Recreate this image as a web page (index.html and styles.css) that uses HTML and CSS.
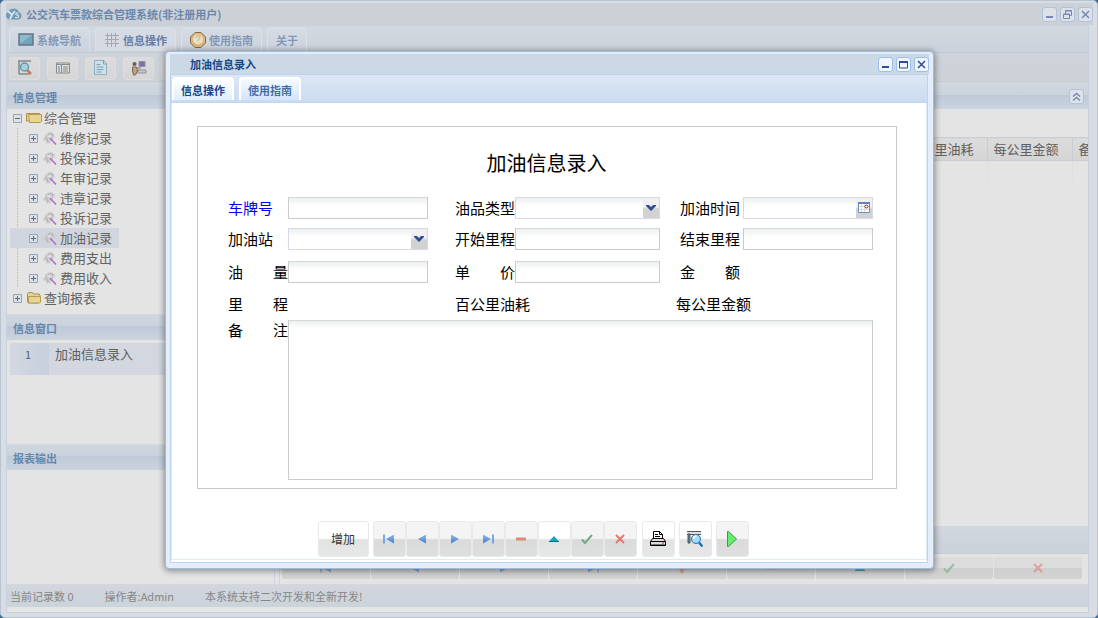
FILE: index.html
```html
<!DOCTYPE html>
<html lang="zh-CN">
<head>
<meta charset="utf-8">
<title>公交汽车票款综合管理系统</title>
<link rel="stylesheet" href="styles.css">
</head>
<body>
<svg class="defs" aria-hidden="true">
  <defs>
    <linearGradient id="blue" x1="0" y1="0" x2="0" y2="1"><stop offset="0" stop-color="#8cbcf0"/><stop offset="1" stop-color="#3f7fc8"/></linearGradient>
    <symbol id="minimize" viewBox="0 0 15 15"><path d="M4 10h7" stroke="currentColor" stroke-width="2"/></symbol>
    <symbol id="maximize" viewBox="0 0 15 15"><path d="M3.500 4v7h8V4" fill="none" stroke="currentColor"/><path d="M3 5h9" stroke="currentColor" stroke-width="2"/></symbol>
    <symbol id="restore" viewBox="0 0 15 15"><path d="M5.500 7V3.500h6v5H9M3.500 7h6v4.500h-6zM3 7.500h7M5 4h7" fill="none" stroke="currentColor"/></symbol>
    <symbol id="close" viewBox="0 0 15 15"><path d="M4 4l7 7M11 4l-7 7" stroke="currentColor" stroke-width="1.500"/></symbol>
    <symbol id="first" viewBox="0 0 16 16"><path d="M3 3.500v9" stroke="#4f93de" stroke-width="1.500"/><path d="M13 3.500v9L5 8z" fill="url(#blue)"/></symbol>
    <symbol id="prev" viewBox="0 0 16 16"><path d="M12 3.500v9L4 8z" fill="url(#blue)"/></symbol>
    <symbol id="next" viewBox="0 0 16 16"><path d="M4 3.500v9L12 8z" fill="url(#blue)"/></symbol>
    <symbol id="last" viewBox="0 0 16 16"><path d="M3 3.500v9L11 8z" fill="url(#blue)"/><path d="M13 3.500v9" stroke="#4f93de" stroke-width="1.500"/></symbol>
    <symbol id="plus" viewBox="0 0 16 16"><path d="M3 8h10M8 3v10" stroke="#dd7a60" stroke-width="3"/></symbol>
    <symbol id="minus" viewBox="0 0 16 16"><path d="M3 8h10" stroke="#e08a72" stroke-width="3"/></symbol>
    <symbol id="up" viewBox="0 0 16 16"><path d="M3 10.500h10L8 5z" fill="#12a5bd"/><path d="M3 10.500h10" stroke="#0b6d82"/></symbol>
    <symbol id="check" viewBox="0 0 16 16"><path d="M3 8.500l3 3.500 7-8" fill="none" stroke="#6fab88" stroke-width="2"/></symbol>
    <symbol id="cross" viewBox="0 0 16 16"><path d="M4 4l8 8M12 4l-8 8" stroke="#e2796f" stroke-width="2"/></symbol>
    <symbol id="chevron" viewBox="0 0 16 20"><path d="M3 7h3l2 2 2-2h3v1l-5 5-5-5z" fill="#2d4f93"/></symbol>
    <symbol id="gear" viewBox="0 0 14 14"><path d="M0 8l2-3 0-2 2 0 1-2 2 1 1-2 2 3 2 0-1 2 2 1-3 1 0 2-2 1-1 3-2-1-2 1 0-3-2 0z" fill="#cdcdcd"/><path d="M5 4l3-2M9 2l1 3M3 6l2 5" stroke="#adadad" fill="none"/><path d="M5.500 4.500l2 2" stroke="#e4e4e4" stroke-width="2"/><path d="M7 7l6 6.500" stroke="#b06ed0" stroke-width="1.600"/></symbol>
    <symbol id="folder" viewBox="0 0 16 12"><path d="M1.500 10V1.500l1-1h4l1 1.500h5.500l1 1V10l-1 1H2.500z" fill="#e3d295" stroke="#ad914d"/><path d="M2.500 4.500h12v5.500l-1 1h-11z" fill="#e6d491" stroke="#b79b53"/></symbol>
    <symbol id="folder-open" viewBox="0 0 16 12"><path d="M.5 9V1.500h13V9z" fill="#e3d295" stroke="#ad914d"/><path d="M2.500 2.500h13v7l-1 1h-11z" fill="#e8d68e" stroke="#b79b53"/></symbol>
    <symbol id="expand" viewBox="0 0 9 9"><path d="M.5.5h8v8h-8z" fill="#dbe0e6" stroke="#93a6bd"/><path d="M2 4.500h5M4.500 2v5" stroke="#5a6a80"/></symbol>
    <symbol id="collapse" viewBox="0 0 9 9"><path d="M.5.5h8v8h-8z" fill="#dbe0e6" stroke="#93a6bd"/><path d="M2 4.500h5" stroke="#5a6a80"/></symbol>
  </defs>
</svg>

<div class="app">
  <header class="titlebar">
    <svg class="logo" viewBox="0 0 16 14"><path d="M4 12.500a4 4 0 0 1-2-7.500 4 4 0 0 1 4-3 5 5 0 0 1 7 3 4 4 0 0 1 0 7.500z" fill="#6f9cbb"/><path d="M2 4l4 4 3-4M6 8l-2 4" stroke="#dce4eb" stroke-width="1.800" fill="none"/><path d="M12.500 6H10v2h2.500v2.500H9" stroke="#dce4eb" fill="none"/></svg>
    <h1 class="caption">公交汽车票款综合管理系统(非注册用户)</h1>
    <button class="tool muted" type="button" aria-label="最小化"><svg><use href="#minimize"/></svg></button>
    <button class="tool muted" type="button" aria-label="还原"><svg><use href="#restore"/></svg></button>
    <button class="tool muted" type="button" aria-label="关闭"><svg><use href="#close"/></svg></button>
  </header>

  <div class="frame">
    <nav class="menu">
      <button class="menu-tab" type="button"><svg viewBox="0 0 16 16"><path d="M1 2h14v11H1z" fill="#71a3bd" stroke="#647585" stroke-width="1.500"/><path d="M2 3h12L2 12z" fill="#8fb9cc"/></svg>系统导航</button>
      <button class="menu-tab current" type="button"><svg viewBox="0 0 16 16"><path d="M3.500 1v14M7.500 1v14M11.500 1v14M1 3.500h14M1 7.500h14M1 11.500h14" stroke="#a7a7a7"/></svg>信息操作</button>
      <button class="menu-tab" type="button"><svg viewBox="0 0 16 16"><path d="M5 .5h6L15.500 5v6L11 15.500H5L.5 11V5z" fill="#dbb875" stroke="#846a50"/><circle cx="8" cy="7.500" r="5" fill="#e6dfce"/><path d="M6 6c0-3 5-3 4 0-.5 1-2 1-2 3" stroke="#c9a65f" fill="none"/></svg>使用指南</button>
      <button class="menu-tab" type="button">关于</button>
    </nav>

    <div class="toolbar">
      <button class="square" type="button" aria-label="查询"><svg viewBox="0 0 16 16"><path d="M1 1h13M2 14h10M2 1v13" stroke="#888" stroke-width="1.500"/><circle cx="7.500" cy="7" r="4" fill="#a9d0dd" stroke="#629ab1" stroke-width="1.500"/><path d="M10 10l4 4" stroke="#c87a5a" stroke-width="2.500"/></svg></button>
      <button class="square" type="button" aria-label="列表"><svg viewBox="0 0 16 16"><path d="M1.500 3h13v10h-13zM1.500 4.500h13M6.500 5v8" fill="#dedede" stroke="#8b8b8b"/><path d="M3 7h2M3 9h2M3 11h2" stroke="#5d8ba2"/><path d="M8 7h5M8 9h5M8 11h5" stroke="#888"/></svg></button>
      <button class="square" type="button" aria-label="单据"><svg viewBox="0 0 16 16"><path d="M1.500.5h9l3 3v11h-12z" fill="#cfe0e8" stroke="#8fb1c2"/><path d="M10.500 0v4h3M3.500 4.500h4M3.500 7h7M3.500 9.500h7M3.500 12h5" stroke="#79a3b8" fill="none"/></svg></button>
      <button class="square" type="button" aria-label="用户"><svg viewBox="0 0 16 16"><path d="M8 1.500h6v5H8z" fill="#7773ad" stroke="#8d91a6"/><path d="M7 10h8v3H7z" fill="#c9c9d1" stroke="#8d8d99"/><path d="M6 8h4" stroke="#777"/><circle cx="3.500" cy="4" r="2" fill="#6b5b50"/><path d="M1.500 7h4l1 4-2 4h-2l-1-4z" fill="#c0a377" stroke="#7a6a55"/></svg></button>
      <button class="square" type="button" aria-label="更多"></button>
    </div>

    <div class="workspace">
      <aside class="sidebar">
        <section class="panel tree-panel">
          <h2 class="panel-head">信息管理</h2>
          <ul class="tree">
            <li><div class="node"><svg class="knob"><use href="#collapse"/></svg><svg class="folder"><use href="#folder-open"/></svg>综合管理</div>
              <ul class="branch">
                <li class="node"><svg class="knob"><use href="#expand"/></svg><svg class="leaf"><use href="#gear"/></svg>维修记录</li>
                <li class="node"><svg class="knob"><use href="#expand"/></svg><svg class="leaf"><use href="#gear"/></svg>投保记录</li>
                <li class="node"><svg class="knob"><use href="#expand"/></svg><svg class="leaf"><use href="#gear"/></svg>年审记录</li>
                <li class="node"><svg class="knob"><use href="#expand"/></svg><svg class="leaf"><use href="#gear"/></svg>违章记录</li>
                <li class="node"><svg class="knob"><use href="#expand"/></svg><svg class="leaf"><use href="#gear"/></svg>投诉记录</li>
                <li class="node selected"><svg class="knob"><use href="#expand"/></svg><svg class="leaf"><use href="#gear"/></svg>加油记录</li>
                <li class="node"><svg class="knob"><use href="#expand"/></svg><svg class="leaf"><use href="#gear"/></svg>费用支出</li>
                <li class="node"><svg class="knob"><use href="#expand"/></svg><svg class="leaf"><use href="#gear"/></svg>费用收入</li>
              </ul>
            </li>
            <li><div class="node"><svg class="knob"><use href="#expand"/></svg><svg class="folder"><use href="#folder"/></svg>查询报表</div></li>
          </ul>
        </section>
        <section class="panel windows-panel">
          <h2 class="panel-head">信息窗口</h2>
          <div class="window-row"><span class="row-number">1</span><span>加油信息录入</span></div>
        </section>
        <section class="panel report-panel">
          <h2 class="panel-head">报表输出</h2>
        </section>
      </aside>

      <main class="content">
        <div class="panel-head content-head">
          <button class="tool muted fold" type="button" aria-label="折叠"><svg viewBox="0 0 15 15"><path d="M4 7.500l3.500-3 3.500 3M4 11.500l3.500-3 3.500 3" fill="none" stroke="currentColor" stroke-width="1.500"/></svg></button>
        </div>
        <table class="records">
          <colgroup><col><col class="col"><col class="col"><col class="col-last"></colgroup>
          <thead><tr><th></th><th>百公里油耗</th><th>每公里金额</th><th>备注</th></tr></thead>
          <tbody><tr><td></td><td></td><td></td><td></td></tr></tbody>
        </table>
        <div class="content-strip"></div>
        <div class="record-nav">
          <button type="button" aria-label="首条"><svg><use href="#first"/></svg></button>
          <button type="button" aria-label="上一条"><svg><use href="#prev"/></svg></button>
          <button type="button" aria-label="下一条"><svg><use href="#next"/></svg></button>
          <button type="button" aria-label="末条"><svg><use href="#last"/></svg></button>
          <button type="button" aria-label="新增"><svg><use href="#plus"/></svg></button>
          <button type="button" aria-label="删除"><svg><use href="#minus"/></svg></button>
          <button type="button" aria-label="编辑"><svg><use href="#up"/></svg></button>
          <button type="button" aria-label="提交"><svg><use href="#check"/></svg></button>
          <button type="button" aria-label="取消"><svg><use href="#cross"/></svg></button>
        </div>
      </main>
    </div>

    <footer class="status"><span>当前记录数 0</span><span>操作者:Admin</span><span>本系统支持二次开发和全新开发!</span></footer>
  </div>

  <section class="dialog" role="dialog" aria-labelledby="dialog-title">
    <header class="dialog-bar">
      <h2 class="caption" id="dialog-title">加油信息录入</h2>
      <button class="tool" type="button" aria-label="最小化"><svg><use href="#minimize"/></svg></button>
      <button class="tool" type="button" aria-label="最大化"><svg><use href="#maximize"/></svg></button>
      <button class="tool" type="button" aria-label="关闭"><svg><use href="#close"/></svg></button>
    </header>
    <div class="dialog-body">
      <nav class="dialog-tabs">
        <button class="dialog-tab current" type="button">信息操作</button>
        <button class="dialog-tab" type="button">使用指南</button>
      </nav>
      <form class="entry">
        <div class="sheet">
          <h3 class="sheet-title">加油信息录入</h3>
          <div class="fields">
            <label class="required" for="plate">车牌号</label>
            <input class="box" id="plate" type="text">
            <label class="second" for="oil">油品类型</label>
            <span class="combo"><select class="box" id="oil"></select><svg class="trigger"><use href="#chevron"/></svg></span>
            <label class="third" for="time">加油时间</label>
            <span class="combo"><input class="box" id="time" type="text"><svg class="trigger" viewBox="0 0 16 20"><path d="M2.500 4.500h11v10h-11z" fill="#fff" stroke="#6c8fbf"/><path d="M2 5h12" stroke="#5c86bd" stroke-width="2"/><path d="M5.500 6v8M8.500 6v8M3 8.500h10M3 11.500h10" stroke="#dadada"/><circle cx="10.500" cy="8.500" r="1.500" fill="#fff" stroke="#a82020"/></svg></span>

            <label for="station">加油站</label>
            <span class="combo"><select class="box" id="station"></select><svg class="trigger"><use href="#chevron"/></svg></span>
            <label class="second" for="start">开始里程</label>
            <input class="box" id="start" type="text">
            <label class="third" for="end">结束里程</label>
            <input class="box" id="end" type="text">

            <label for="amount">油　　量</label>
            <input class="box" id="amount" type="text">
            <label class="second" for="price">单　　价</label>
            <input class="box" id="price" type="text">
            <span class="third wide">金　　额</span>

            <span class="wide">里　　程</span>
            <span class="second wide">百公里油耗</span>
            <span class="third wide per-km">每公里金额</span>

            <label class="note-label" for="note">备　　注</label>
            <textarea class="box note" id="note"></textarea>
          </div>
        </div>
        <div class="actions">
          <button class="action add" type="button">增加</button>
          <div class="action-group">
            <button class="action off" type="button" aria-label="首条"><svg><use href="#first"/></svg></button>
            <button class="action off" type="button" aria-label="上一条"><svg><use href="#prev"/></svg></button>
            <button class="action off" type="button" aria-label="下一条"><svg><use href="#next"/></svg></button>
            <button class="action off" type="button" aria-label="末条"><svg><use href="#last"/></svg></button>
            <button class="action off" type="button" aria-label="删除"><svg><use href="#minus"/></svg></button>
            <button class="action" type="button" aria-label="编辑"><svg><use href="#up"/></svg></button>
            <button class="action off" type="button" aria-label="提交"><svg><use href="#check"/></svg></button>
            <button class="action off" type="button" aria-label="取消"><svg><use href="#cross"/></svg></button>
          </div>
          <button class="action" type="button" aria-label="打印"><svg viewBox="0 0 16 16"><path d="M3.500 8V.5h6l3 3V8" fill="#fff" stroke="#000"/><path d="M9.500 0v3.500h3M5 3.500h3M5 5.500h5" stroke="#000" fill="none"/><path d="M.5 10.500l2-3h11l2 3v4H.5z" fill="#ddd" stroke="#000"/><path d="M1 10.500h14" stroke="#000"/><path d="M1 13.500h14" stroke="#777"/><path d="M12 12h2" stroke="#d43030"/></svg></button>
          <button class="action" type="button" aria-label="预览"><svg viewBox="0 0 16 16"><path d="M0 .5h14M0 3.500h14" stroke="#555"/><path d="M0 1h14v2H0z" fill="#ddd"/><path d="M1 3h2v9H1z" fill="#4b8bc1" stroke="#555"/><circle cx="9" cy="8" r="4.500" fill="#9fdcff" stroke="#2c6fa8"/><path d="M6.500 8c0-2 1-3 3-3" stroke="#fff" stroke-width="1.500" fill="none"/><path d="M12 11.500l3.500 4" stroke="#1976b5" stroke-width="2.500"/></svg></button>
          <button class="action off" type="button" aria-label="执行"><svg viewBox="0 0 16 16"><path d="M3.500.5v15h1L12.500 8 4.500.5z" fill="#62ef69" stroke="#4a8f50"/></svg></button>
        </div>
      </form>
    </div>
  </section>
</div>
</body>
</html>
```
FILE: styles.css
```css
* { box-sizing: border-box; }

body {
  margin: 0;
  background: #3f6a94;
  color: #606060;
  font: 13px/20px "Noto Sans CJK SC", "Noto Sans", sans-serif;
}

button, input, select, textarea { font: inherit; color: inherit; margin: 0; }
button { padding: 0; border: 0; background: none; }
h1, h2, h3, ul { margin: 0; padding: 0; list-style: none; font-weight: normal; }
.defs { position: absolute; width: 0; height: 0; }

/* Main window */
.app {
  position: relative;
  display: flex;
  flex-direction: column;
  min-height: 100vh;
  padding: 2px 5px 4px 5px;
  border: 1px solid #b8c4d2;
  border-radius: 5px;
  background: #d8dce3;
  overflow: hidden;
}

.titlebar {
  display: flex;
  align-items: center;
  gap: 3px;
  height: 22px;
  margin-right: -1px;
  background: #cbd1d7;
}
.logo { width: 16px; height: 14px; }
.caption { flex: 1; font-size: 11px; font-weight: bold; line-height: 16px; }
.titlebar .caption { color: #6988af; margin-left: 1px; }

.tool {
  width: 15px;
  height: 15px;
  border-radius: 3px;
  background: #f0f6ff;
  box-shadow: inset 0 0 0 1px #9dbfea;
  color: #2d4c9c;
}
.tool svg { display: block; width: 15px; height: 15px; }
.tool.muted { background: #dde2e8; box-shadow: inset 0 0 0 1px #b2c2d8; color: #7788b8; }

.frame {
  flex: 1;
  display: flex;
  flex-direction: column;
  margin-right: 3px;
  padding-bottom: 5px;
  border: 1px solid #c6d0df;
  background: #e4e4e4;
}

.menu {
  display: flex;
  align-items: flex-end;
  gap: 5px;
  height: 27px;
  padding: 0 2px 1px;
  background: linear-gradient(#d3d8e0, #cbd2db);
  border-bottom: 1px solid #bfcbd9;
}
.menu-tab {
  display: flex;
  align-items: center;
  gap: 3px;
  height: 23px;
  padding: 0 8px;
  border: 1px solid #dde1e7;
  border-bottom: 0;
  border-radius: 4px 4px 0 0;
  background: linear-gradient(#d6dae2, #cbd3df);
  color: #8298b7;
  font-size: 11px;
  font-weight: bold;
}
.menu-tab.current { color: #6680a8; background: #d5dae3; }
.menu-tab svg { width: 16px; height: 16px; }

.toolbar {
  display: flex;
  align-items: center;
  gap: 7px;
  height: 30px;
  padding: 0 2px;
  background: linear-gradient(#cfd4dc, #ccd1d7);
}
.square {
  display: flex;
  align-items: center;
  justify-content: center;
  width: 31px;
  height: 23px;
  border-radius: 3px;
  background: linear-gradient(#dcdcdc, #d6d6d6);
  border: 1px solid #dedede;
}
.square svg { width: 16px; height: 16px; }

.workspace { flex: 1; display: flex; }

.panel-head {
  height: 26px;
  padding: 0 6px;
  border-top: 1px solid #d6dbe2;
  background: linear-gradient(#cfd6df 0, #cad3dd 44%, #becad9 45%, #cbd4de 100%);
  color: #6786ae;
  font-size: 11px;
  font-weight: bold;
  line-height: 26px;
}

.sidebar { display: flex; flex-direction: column; width: 268px; border-right: 1px solid #cfd4de; }
.tree-panel { flex: 231 0 0; }
.windows-panel { flex: 129 0 0; }
.report-panel { flex: 140 0 0; }

.tree { padding-left: 3px; margin-top: -1px; }
.node { display: flex; align-items: center; width: 109px; height: 20px; padding-left: 3px; color: #636363; }
.branch { background: repeating-linear-gradient(#b8b8b8 0 1px, transparent 1px 2px) 7px 0 / 1px 100% no-repeat; }
.branch .node { padding-left: 19px; }
.selected { background: #d0d5df; }
.knob { width: 9px; height: 9px; margin-right: 4px; }
.folder { width: 16px; height: 12px; margin-right: 2px; }
.leaf { width: 14px; height: 14px; margin: 0 3px 0 1px; }

.window-row { display: flex; height: 32px; margin: 3px; background: #d2d7e0; }
.row-number { width: 39px; margin-right: 6px; padding-right: 3px; text-align: center; font-size: 11px; background: linear-gradient(90deg, #d3d8e1, #c7d0df); }
.window-row span { padding-top: 1px; }

.content { flex: 1; display: flex; flex-direction: column; margin-left: 4px; border-left: 1px solid #cfd4de; min-width: 0; }
.content-head { display: flex; justify-content: flex-end; align-items: center; padding-right: 4px; }
.records { width: 100%; margin-top: 28px; table-layout: fixed; border-collapse: collapse; }
.col { width: 85px; }
.col-last { width: 16px; }
.records th {
  height: 23px;
  padding: 0 0 0 6px;
  border: 1px solid #c8ccd3;
  border-width: 1px 1px 1px 0;
  background: linear-gradient(#dcdcdc, #d4d4d4);
  font-weight: normal;
  text-align: left;
  white-space: nowrap;
  overflow: hidden;
}
.records th:last-child, .records td:last-child { border-right: 0; }
.records td { height: 21px; padding: 0; border-right: 1px solid #dfdfdf; }
.content-strip { height: 28px; margin-top: auto; background: linear-gradient(#d2d6df, #cad2da); border-bottom: 1px solid #c2ccda; }
.record-nav { display: grid; grid-template-columns: repeat(9, 1fr); gap: 1px; padding: 3px 6px 5px 2px; }
.record-nav button {
  display: flex;
  align-items: center;
  justify-content: center;
  height: 22px;
  border-radius: 2px;
  background: linear-gradient(#dcdcdc 50%, #cfcfcf 52%, #d3d3d3);
}
.record-nav svg { width: 16px; height: 16px; opacity: 0.6; }

.status {
  display: flex;
  align-items: center;
  gap: 31px;
  height: 23px;
  padding: 0 3px;
  background: linear-gradient(#d2d6de, #cbd3db);
  color: #878787;
  font-size: 11px;
}

/* Entry dialog */
.dialog {
  position: absolute;
  inset: 50px 163px 48px 164px;
  display: flex;
  flex-direction: column;
  padding: 2px 5px 5px 4px;
  border: 1px solid #9cbbdf;
  border-radius: 4px;
  background: #e3edfb;
  box-shadow: 0 1px 6px 1px rgba(0, 0, 0, 0.4);
  color: #000;
}
.dialog-bar {
  display: flex;
  align-items: center;
  gap: 3px;
  height: 20px;
  margin-right: -1px;
  padding-left: 20px;
  background: #cbd8e6;
}
.dialog-bar .caption { color: #15498b; }
.dialog-body { flex: 1; display: flex; flex-direction: column; border: 1px solid #bcd3f0; background: #fff; }
.dialog-tabs {
  display: flex;
  align-items: flex-end;
  gap: 5px;
  height: 28px;
  padding: 0 1px 2px;
  background: linear-gradient(#dde7f6, #cbdbef);
  border-bottom: 1px solid #bfd5f0;
}
.dialog-tab {
  width: 62px;
  height: 23px;
  border: 2px solid #fff;
  border-bottom: 0;
  border-radius: 4px 4px 0 0;
  background: linear-gradient(#f6faff, #d3e4fb);
  color: #426fab;
  font-size: 11px;
  font-weight: bold;
}
.dialog-tab.current { background: linear-gradient(#fff, #e1edfd); color: #15498b; }

.entry { flex: 1; display: flex; flex-direction: column; padding: 23px 29px 0 25px; border: 1px solid #deebfa; border-top: 0; margin: 0 0 2px; }
.sheet {
  flex: 1;
  display: flex;
  flex-direction: column;
  padding: 21px 23px 8px 30px;
  border: 1px solid #c8c8c8;
}
.sheet-title { margin: 0 0 14px; padding-right: 8px; text-align: center; font-size: 20px; line-height: 30px; }
.fields {
  flex: 1;
  display: grid;
  grid-template-columns: 60px 140fr 87px 145fr 83px 130fr;
  grid-template-rows: 31px 32px 33px 32px 1fr;
  align-items: center;
  font-size: 15px;
}
.required { color: #0000f0; }
.second { padding-left: 27px; }
.third { padding-left: 20px; }
.wide { grid-column: span 2; }
.per-km { padding-left: 16px; }
.note-label { align-self: start; }
.box {
  display: block;
  width: 100%;
  height: 22px;
  padding: 0 4px;
  border: 1px solid #c9cccc;
  border-top-color: #d4d8d8;
  border-radius: 0;
  outline: 0;
  background: linear-gradient(#edf0f0, #fff 8px);
  appearance: none;
}
.note { grid-column: 2 / -1; height: 100%; resize: none; }
.combo { position: relative; }
.combo .box { border-color: #d6d9e6; padding-right: 18px; }
.trigger {
  position: absolute;
  top: 1px;
  right: 1px;
  width: 16px;
  height: 20px;
  background: linear-gradient(#f0f0f0 45%, #d2d2d2 55%);
}

.actions { display: flex; justify-content: center; gap: 4px; padding: 32px 28px 2px 0; }
.action-group { display: flex; margin-right: 1px; }
.action {
  display: flex;
  align-items: center;
  justify-content: center;
  width: 33px;
  height: 36px;
  border: 1px solid #e9e9e9;
  border-radius: 3px;
  background: linear-gradient(#fff 48%, #e2e2e2 52%, #e7e7e7);
  color: #333;
}
.action.add { width: 51px; font-size: 12px; }
.action.off { background: linear-gradient(#f4f4f4 48%, #dadada 52%, #dfdfdf); }
.action svg { width: 16px; height: 16px; }
```
